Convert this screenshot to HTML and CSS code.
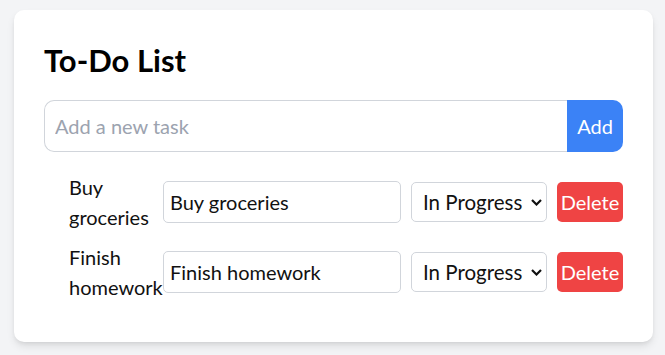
FILE: index.html
```html
<!DOCTYPE html>
<html lang="en">
<head>
<meta charset="utf-8">
<title>To-Do List</title>
<link rel="stylesheet" href="styles.css">
</head>
<body>
<main class="card">
  <h1 class="title">To-Do List</h1>
  <form class="add-form">
    <input class="add-input" type="text" placeholder="Add a new task">
    <button class="add-btn" type="button">Add</button>
  </form>
  <ul class="tasks">
    <li class="task">
      <span class="task-label">Buy groceries</span>
      <input class="task-input" type="text" value="Buy groceries">
      <span class="select-wrap">
        <select class="task-status">
          <option>In Progress</option>
          <option>Completed</option>
          <option>Not Started</option>
        </select>
        <svg class="chevron" width="11" height="7" viewBox="0 0 11 7"><path d="M1 1l4.5 4.5L10 1" fill="none" stroke="#111" stroke-width="2.2"/></svg>
      </span>
      <button class="del-btn" type="button">Delete</button>
    </li>
    <li class="task">
      <span class="task-label">Finish homework</span>
      <input class="task-input" type="text" value="Finish homework">
      <span class="select-wrap">
        <select class="task-status">
          <option>In Progress</option>
          <option>Completed</option>
          <option>Not Started</option>
        </select>
        <svg class="chevron" width="11" height="7" viewBox="0 0 11 7"><path d="M1 1l4.5 4.5L10 1" fill="none" stroke="#111" stroke-width="2.2"/></svg>
      </span>
      <button class="del-btn" type="button">Delete</button>
    </li>
  </ul>
</main>
</body>
</html>
```
FILE: styles.css
```css
* { box-sizing: border-box; }

html, body {
  margin: 0;
  height: 100%;
}

body {
  background: #f3f4f6;
  font-family: Lato, "Noto Sans", sans-serif;
  font-size: 20px;
  color: #111;
  padding: 10px 12px 0 14px;
}

.card {
  width: 639px;
  background: #fff;
  border-radius: 10px;
  box-shadow: 0 5px 8px -1px rgba(0,0,0,0.1), 0 2px 5px -2px rgba(0,0,0,0.1);
  padding: 30px 30px 40px;
}

.title {
  margin: 0 0 20px;
  font-size: 31px;
  line-height: 40px;
  font-weight: 700;
  color: #000;
}

.add-form {
  display: flex;
  margin: 0 0 20px;
}

.add-input {
  flex: 1;
  min-width: 0;
  height: 52px;
  padding: 10px;
  font: inherit;
  line-height: 30px;
  border: 1px solid #d1d5db;
  border-right: none;
  border-radius: 10px 0 0 10px;
  color: #111;
  outline: none;
}

.add-input::placeholder { color: #9ca3af; }

.add-btn {
  width: 56px;
  height: 52px;
  padding: 0;
  font: inherit;
  color: #fff;
  background: #3b82f6;
  border: none;
  border-radius: 0 10px 10px 0;
}

.tasks {
  list-style: none;
  margin: 0;
  padding: 0 0 0 25px;
  display: flex;
  flex-direction: column;
  gap: 10px;
}

.task {
  display: grid;
  grid-template-columns: 84px 238px 136px 66px;
  column-gap: 10px;
  align-items: center;
}

.task-label {
  min-width: 0;
  line-height: 30px;
}

.task-input {
  width: 238px;
  height: 42px;
  padding: 5px 6px;
  font: inherit;
  line-height: 30px;
  color: #111;
  border: 1px solid #d1d5db;
  border-radius: 5px;
  outline: none;
}

.select-wrap {
  position: relative;
  display: block;
  width: 136px;
  height: 40px;
}

.task-status {
  appearance: none;
  -webkit-appearance: none;
  display: block;
  width: 136px;
  height: 40px;
  padding: 0 10px 0 11px;
  font: inherit;
  font-size: 20.5px;
  color: #111;
  background: #fff;
  border: 1px solid #d1d5db;
  border-radius: 5px;
  outline: none;
}

.chevron {
  position: absolute;
  right: 5px;
  top: 17px;
  pointer-events: none;
}

.del-btn {
  width: 66px;
  height: 40px;
  padding: 0;
  font: inherit;
  color: #fff;
  background: #ef4444;
  border: none;
  border-radius: 5px;
}
```
